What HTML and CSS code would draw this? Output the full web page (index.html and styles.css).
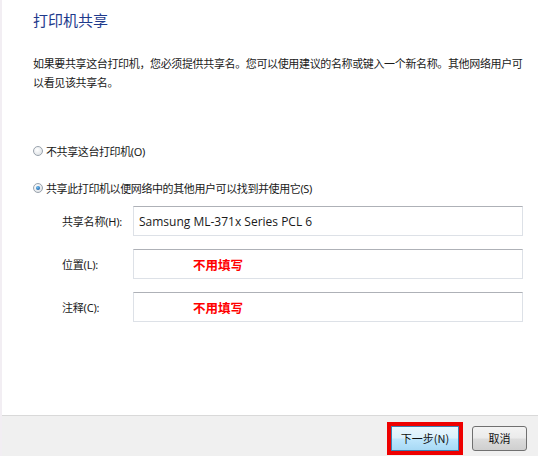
FILE: index.html
```html
<!DOCTYPE html>
<html lang="zh-CN">
<head>
<meta charset="utf-8">
<title>打印机共享</title>
<link rel="stylesheet" href="styles.css">
</head>
<body>
<div class="dialog">
  <div class="main">
    <h1 class="title">打印机共享</h1>
    <p class="desc">如果要共享这台打印机，您必须提供共享名。您可以使用建议的名称或键入一个新名称。其他网络用户可<br>以看见该共享名。</p>
    <div class="radio-row first">
      <span class="radio"></span>
      <span>不共享这台打印机(O)</span>
    </div>
    <div class="radio-row second">
      <span class="radio checked"></span>
      <span>共享此打印机以便网络中的其他用户可以找到并使用它(S)</span>
    </div>
    <div class="fields">
      <div class="field">
        <span class="label">共享名称(H):</span>
        <div class="input"><span class="value">Samsung ML-371x Series PCL 6</span></div>
      </div>
      <div class="field">
        <span class="label">位置(L):</span>
        <div class="input"><span class="note">不用填写</span></div>
      </div>
      <div class="field">
        <span class="label">注释(C):</span>
        <div class="input"><span class="note">不用填写</span></div>
      </div>
    </div>
  </div>
  <div class="footer">
    <div class="highlight"><button class="btn primary">下一步(N)</button></div>
    <button class="btn">取消</button>
  </div>
</div>
</body>
</html>
```
FILE: styles.css
```css
html, body {
  margin: 0;
  padding: 0;
  background: #ffffff;
}
body {
  width: 538px;
  height: 456px;
  overflow: hidden;
  font-family: "Noto Sans", "Noto Sans CJK SC", sans-serif;
  color: #222222;
}
.dialog {
  width: 538px;
  height: 456px;
  display: flex;
  flex-direction: column;
  box-sizing: border-box;
  border-left: 2px solid #f2eef3;
}
.main {
  flex: 1;
  padding: 10px 15px 0 31px;
}
.title {
  margin: 0;
  font-size: 15px;
  line-height: 20px;
  font-weight: normal;
  color: #1e3a8c;
  font-family: "Noto Sans CJK SC", sans-serif;
}
.desc {
  margin: 24px 0 0 0;
  font-size: 11px;
  line-height: 19px;
  letter-spacing: -0.36px;
  color: #1a1a1a;
  font-family: "Noto Sans CJK SC", sans-serif;
  white-space: nowrap;
}
.radio-row {
  display: flex;
  align-items: center;
  gap: 3px;
  height: 18px;
  font-size: 11px;
  letter-spacing: -0.4px;
  color: #1a1a1a;
  font-family: "Noto Sans", "Noto Sans CJK SC", sans-serif;
}
.radio-row.first { margin-top: 50px; }
.radio-row.second { margin-top: 19px; }
.radio {
  width: 8px;
  height: 8px;
  border-radius: 50%;
  border: 1px solid #9aa3ad;
  background: radial-gradient(circle at 40% 35%, #ffffff 0%, #e4e7ea 70%, #cfd4d9 100%);
  flex: none;
  position: relative;
}
.radio.checked::after {
  content: "";
  position: absolute;
  left: 2px;
  top: 2px;
  width: 4px;
  height: 4px;
  border-radius: 50%;
  background: radial-gradient(circle at 40% 35%, #6fc0f0 0%, #1b5fa8 80%);
}
.fields {
  margin-top: 9px;
  display: flex;
  flex-direction: column;
  gap: 13px;
}
.field {
  display: flex;
  align-items: center;
}
.label {
  width: 71px;
  padding-left: 29px;
  flex: none;
  font-size: 11px;
  letter-spacing: -0.2px;
  color: #1a1a1a;
}
.input {
  width: 390px;
  height: 30px;
  box-sizing: border-box;
  border: 1px solid #dde1e7;
  border-top-color: #aeb1b7;
  background: #ffffff;
  display: flex;
  align-items: center;
  padding-left: 5px;
}
.value {
  font-size: 12px;
  color: #1a1a1a;
  font-family: "Open Sans", "Noto Sans", sans-serif;
}
.note {
  margin-left: 54px;
  font-size: 12.5px;
  font-weight: bold;
  color: #ff0000;
  font-family: "Noto Sans CJK SC", sans-serif;
}
.footer {
  height: 41px;
  box-sizing: border-box;
  border-top: 1px solid #d9d9d9;
  background: #f0f0f0;
  display: flex;
  justify-content: flex-end;
  align-items: center;
  gap: 9px;
  padding: 6px 11px 2px 0;
}
.highlight {
  border: 4px solid #ee0000;
  display: flex;
}
.btn {
  height: 25px;
  width: 55px;
  box-sizing: border-box;
  border: 1px solid #707070;
  border-radius: 3px;
  background: linear-gradient(#f3f3f3 0%, #ebebeb 48%, #dcdcdc 52%, #cfcfcf 100%);
  font-family: "Noto Sans CJK SC", sans-serif;
  font-size: 11px;
  color: #111111;
  padding: 0;
  margin: 0;
}
.btn.primary {
  width: 68px;
  border-color: #3c7fb1;
  border-radius: 0;
  background: linear-gradient(#eaf6fd 0%, #d9f0fc 48%, #bee6fd 52%, #a7d9f5 100%);
}
```
